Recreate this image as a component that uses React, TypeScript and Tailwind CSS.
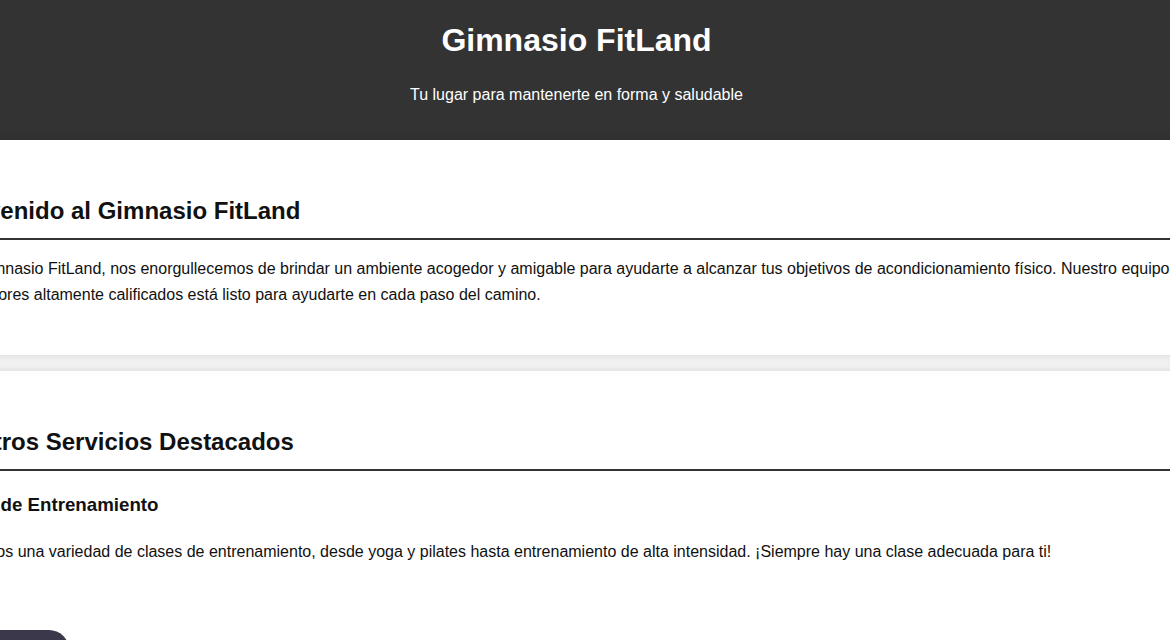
export default function App() {
  return (
    <div className="min-h-screen bg-[#f4f4f4] overflow-hidden font-['Liberation_Sans',Arial,sans-serif] text-[#111]">
      {/* Header */}
      <header className="bg-[#333] text-white text-center pt-[22px] pb-[36px] pr-[17px]">
        <h1 className="text-[32px] leading-[37px] font-bold">Gimnasio FitLand</h1>
        <p className="mt-[27px] text-base leading-[18px]">Tu lugar para mantenerte en forma y saludable</p>
      </header>

      <main className="w-[1325px] -ml-[85px]">
        {/* Bienvenida */}
        <section className="bg-white px-5 pt-[57px] pb-[47px] shadow-[0_0_10px_rgba(0,0,0,0.12)]">
          <h2 className="text-2xl leading-[28px] font-bold pb-[13px] border-b-2 border-[#333]">Bienvenido al Gimnasio FitLand</h2>
          <p className="mt-4 text-base leading-[26px]">
            En el Gimnasio FitLand, nos enorgullecemos de brindar un ambiente acogedor y amigable para ayudarte a alcanzar tus objetivos de acondicionamiento físico. Nuestro equipo de entrenadores altamente calificados está listo para ayudarte en cada paso del camino.
          </p>
        </section>

        {/* Servicios */}
        <section className="mt-4 bg-white px-5 pt-[57px] pb-10 shadow-[0_0_10px_rgba(0,0,0,0.12)]">
          <h2 className="text-2xl leading-[28px] font-bold pb-[13px] border-b-2 border-[#333]">Nuestros Servicios Destacados</h2>
          <h3 className="mt-[23px] text-[18.72px] leading-[22px] font-bold">Clases de Entrenamiento</h3>
          <p className="mt-[23px] text-base leading-[26px]">
            Ofrecemos una variedad de clases de entrenamiento, desde yoga y pilates hasta entrenamiento de alta intensidad. ¡Siempre hay una clase adecuada para ti!
          </p>
          <button className="mt-[65px] h-10 w-[134px] rounded-[20px] bg-[#3a384a] text-white text-base">Ver clases</button>
        </section>
      </main>
    </div>
  )
}
